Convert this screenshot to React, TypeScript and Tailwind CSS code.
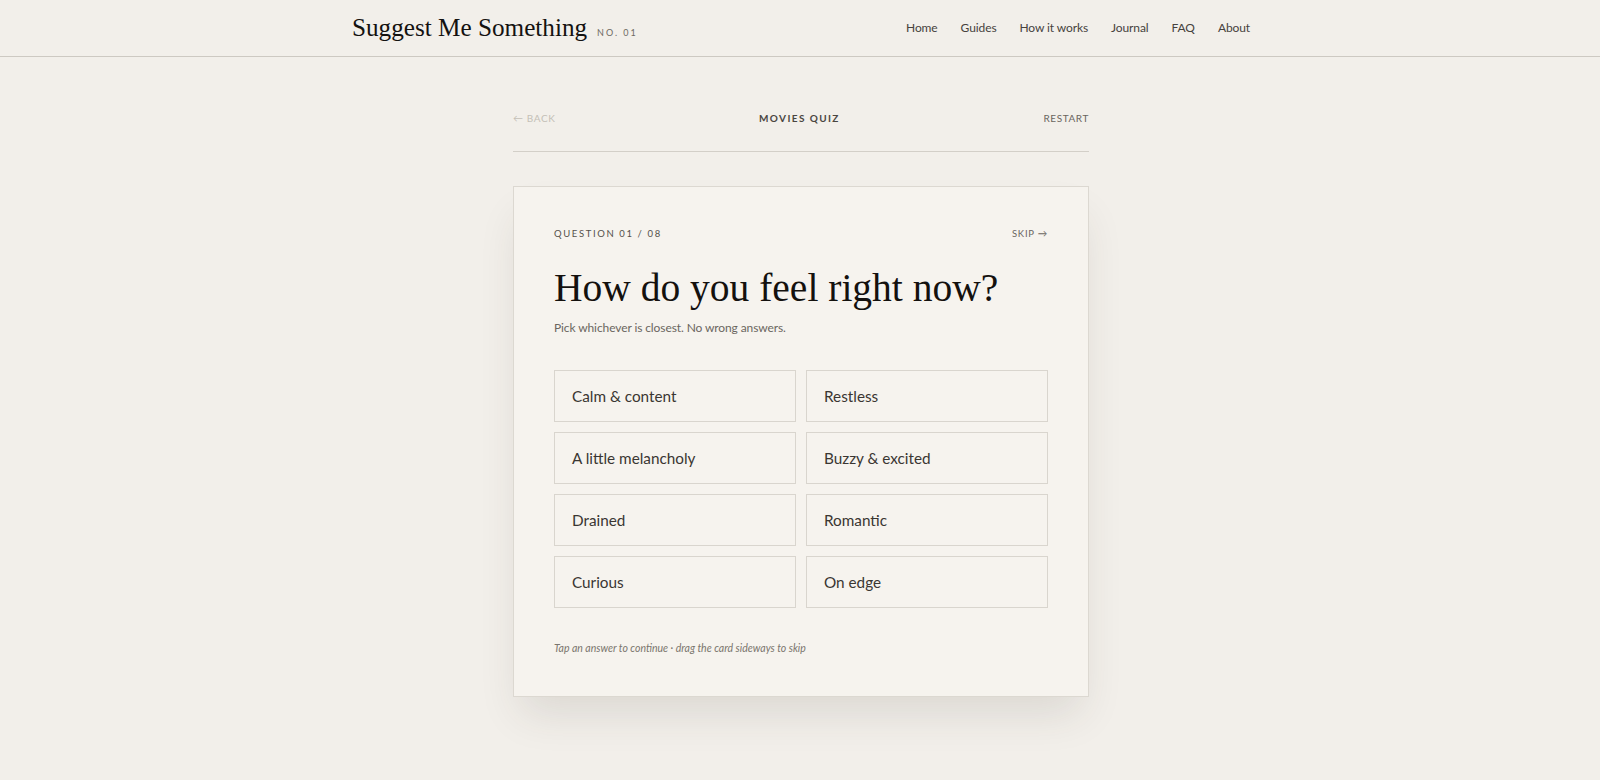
import { useState } from 'react';

const sans = { fontFamily: 'Lato, "Open Sans", sans-serif' };
const serif = { fontFamily: '"Liberation Serif", "Times New Roman", serif' };

const navLinks = ['Home', 'Guides', 'How it works', 'Journal', 'FAQ', 'About'];

const answers = [
  'Calm & content',
  'Restless',
  'A little melancholy',
  'Buzzy & excited',
  'Drained',
  'Romantic',
  'Curious',
  'On edge',
];

function Header() {
  return (
    <header className="h-[57px] border-b border-[#cdc9c2]">
      <div className="w-[900px] h-full mx-auto flex items-center justify-between">
        <a href="#" className="pl-[2px] flex items-baseline gap-[10px] text-[#141210]">
          <span className="text-[25.2px] leading-none" style={serif}>
            Suggest Me Something
          </span>
          <span className="text-[9px] tracking-[0.22em] text-[#6f6a63]" style={sans}>
            NO. 01
          </span>
        </a>
        <nav className="flex items-center gap-[23px] text-[12px] tracking-[-0.1px] text-[#46423d]" style={sans}>
          {navLinks.map((link) => (
            <a key={link} href="#" className="hover:text-black">
              {link}
            </a>
          ))}
        </nav>
      </div>
    </header>
  );
}

function App() {
  const [picked, setPicked] = useState<string | null>(null);

  return (
    <div className="min-h-screen bg-[#f2efea]" style={sans}>
      <Header />

      <main className="w-[578px] mx-auto pl-[2px] pb-20">
        <div className="pt-[53px] pb-[25px] border-b border-[#d3cfc8] flex items-center justify-between text-[10px] leading-4 tracking-[0.06em]">
          <button className="text-[#c4bfb7]">← BACK</button>
          <span className="font-bold tracking-[0.14em] text-[#4a4641]">MOVIES QUIZ</span>
          <button className="text-[#6a655e]">RESTART</button>
        </div>

        <section className="mt-[34px] bg-[#f6f3ee] border border-[#dcd8d1] p-10 shadow-[0_24px_40px_-8px_rgba(60,50,40,0.12)]">
          <div className="flex items-center justify-between h-[15px] text-[9.5px] text-[#55514b]">
            <span className="tracking-[0.17em]">QUESTION 01 / 08</span>
            <button className="tracking-[0.08em] text-[#6a655e]">SKIP →</button>
          </div>

          <h1 className="mt-6 text-[39.5px] leading-[44px] text-[#14110e]" style={serif}>
            How do you feel right now?
          </h1>
          <p className="mt-2 text-[12px] tracking-[-0.1px] leading-5 text-[#6b665f]">
            Pick whichever is closest. No wrong answers.
          </p>

          <div className="mt-8 grid grid-cols-2 gap-[10px]">
            {answers.map((answer) => (
              <button
                key={answer}
                onClick={() => setPicked(answer)}
                className={`h-[52px] pl-[17px] pr-4 text-left text-[15.3px] text-[#3a3632] border ${
                  picked === answer ? 'border-[#8a857d] bg-[#efebe4]' : 'border-[#d9d5ce] bg-[#f6f3ee]'
                }`}
              >
                {answer}
              </button>
            ))}
          </div>

          <p className="mt-8 text-[10.5px] leading-4 italic text-[#7a756d]">
            Tap an answer to continue · drag the card sideways to skip
          </p>
        </section>
      </main>
    </div>
  );
}

export default App;
